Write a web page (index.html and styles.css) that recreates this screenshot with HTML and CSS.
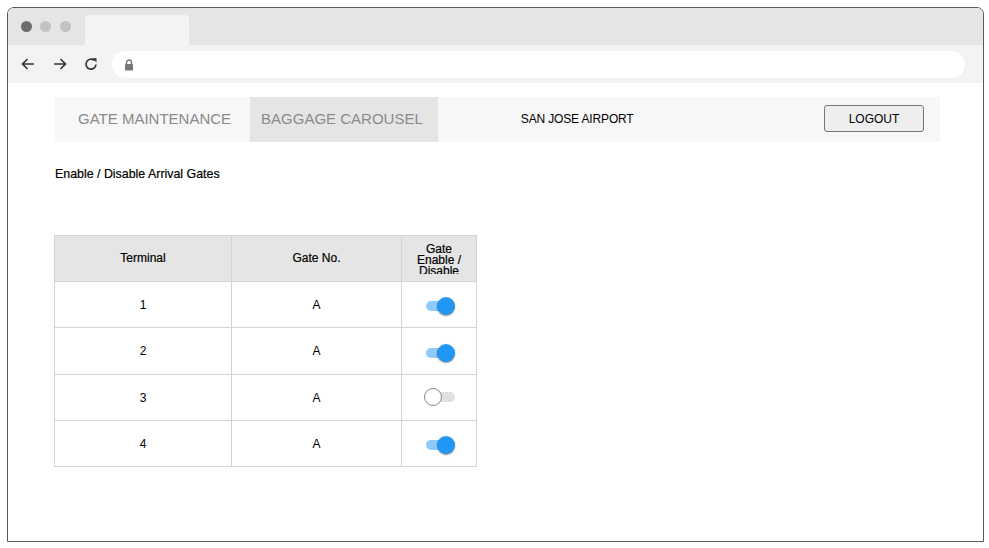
FILE: index.html
```html
<!DOCTYPE html>
<html>
<head>
<meta charset="utf-8">
<link rel="stylesheet" href="styles.css">
</head>
<body>
<div class="frame">
  <div class="tabbar">
    <div class="dots">
      <span class="dot dark"></span>
      <span class="dot"></span>
      <span class="dot"></span>
    </div>
    <div class="tab"></div>
  </div>
  <div class="toolbar">
    <svg class="icon" viewBox="0 0 16 16" width="16" height="16"><path d="M14 8H2.5M7.5 3L2.5 8l5 5" fill="none" stroke="#333" stroke-width="1.6"/></svg>
    <svg class="icon" viewBox="0 0 16 16" width="16" height="16"><path d="M2 8h11.5M8.5 3l5 5-5 5" fill="none" stroke="#333" stroke-width="1.6"/></svg>
    <svg class="icon" viewBox="0 0 16 16" width="16" height="16"><path d="M13 8.5A5 5 0 1 1 11.2 4.3" fill="none" stroke="#333" stroke-width="1.6"/><path d="M9.2 2.2h4.3v4.3z" fill="#333"/></svg>
    <div class="url">
      <svg class="lock" viewBox="0 0 10 12" width="10" height="12"><path d="M2.5 5V3.5a2.5 2.5 0 0 1 5 0V5" fill="none" stroke="#777" stroke-width="1.4"/><rect x="1" y="5" width="8" height="6.5" rx="0.8" fill="#777"/></svg>
    </div>
  </div>
  <div class="page">
    <nav class="nav">
      <a class="nav-link first">GATE MAINTENANCE</a>
      <a class="nav-link active">BAGGAGE CAROUSEL</a>
      <span class="airport">SAN JOSE AIRPORT</span>
      <button class="logout">LOGOUT</button>
    </nav>
    <h1 class="title">Enable / Disable Arrival Gates</h1>
    <table class="gates">
      <thead>
        <tr>
          <th class="c1">Terminal</th>
          <th class="c2">Gate No.</th>
          <th class="c3"><div class="clip">Gate Enable / Disable</div></th>
        </tr>
      </thead>
      <tbody>
        <tr><td>1</td><td>A</td><td><span class="switch on"><span class="track"></span><span class="thumb"></span></span></td></tr>
        <tr><td>2</td><td>A</td><td><span class="switch on"><span class="track"></span><span class="thumb"></span></span></td></tr>
        <tr><td>3</td><td>A</td><td><span class="switch"><span class="track"></span><span class="thumb"></span></span></td></tr>
        <tr><td>4</td><td>A</td><td><span class="switch on"><span class="track"></span><span class="thumb"></span></span></td></tr>
      </tbody>
    </table>
  </div>
</div>
</body>
</html>
```

FILE: styles.css
```css
* { box-sizing: border-box; }
html, body { margin: 0; padding: 0; background: #fff; }
body { font-family: "Liberation Sans", Arial, sans-serif; }

.frame {
  margin: 7px 0 0 7px;
  width: 977px;
  height: 535px;
  border: 1px solid #5a5a5a;
  border-radius: 7px 7px 0 0;
  overflow: hidden;
  background: #fff;
  display: flex;
  flex-direction: column;
}

.tabbar {
  height: 37px;
  background: #e5e5e5;
  display: flex;
  align-items: flex-end;
}
.dots {
  align-self: center;
  display: flex;
  gap: 8.5px;
  padding-left: 12.5px;
  width: 77px;
}
.dot {
  width: 11px;
  height: 11px;
  border-radius: 50%;
  background: #c2c2c2;
}
.dot.dark { background: #6d6d6d; }
.tab {
  width: 104px;
  height: 30px;
  background: #f3f3f3;
  border-radius: 4px 4px 0 0;
}

.toolbar {
  height: 38px;
  background: #f3f3f3;
  display: flex;
  align-items: center;
  padding-left: 12px;
}
.icon { margin-right: 15.5px; flex: none; }
.icon:nth-child(3) { margin-right: 13px; }
.url {
  width: 853px;
  height: 27px;
  background: #fff;
  border-radius: 14px;
  display: flex;
  align-items: center;
  padding-left: 12px;
  margin-top: 1px;
}

.page {
  padding: 14px 0 0 47px;
}

.nav {
  width: 885px;
  height: 45px;
  background: #f7f7f7;
  display: flex;
  align-items: center;
}
.nav-link {
  height: 100%;
  display: flex;
  align-items: center;
  font-size: 15px;
  color: #8a8a8a;
  padding-bottom: 2px;
}
.nav-link.first { padding-left: 23px; padding-right: 19px; }
.nav-link.active { background: #e5e5e5; padding-left: 11px; padding-right: 15px; }
.airport {
  font-size: 12px;
  color: #000;
  margin-left: 83px;
  margin-top: -2px;
  letter-spacing: -0.15px;
}
.logout {
  margin-left: auto;
  margin-right: 16px;
  width: 100px;
  height: 27px;
  background: #eeeeee;
  border: 1px solid #777;
  border-radius: 3px;
  font-family: "Liberation Sans", Arial, sans-serif;
  font-size: 12px;
  color: #000;
  padding: 0;
  margin-top: -2px;
}

.title {
  margin: 25px 0 0 0;
  font-size: 12.4px;
  font-weight: normal;
  color: #000;
  line-height: 14px;
  -webkit-text-stroke: 0.2px #000;
}

.gates {
  margin-top: 54px;
  margin-left: -1px;
  border-collapse: collapse;
  font-size: 12px;
  color: #000;
}
.gates th, .gates td {
  border: 1px solid #d3d3d3;
  text-align: center;
  padding: 0;
}
.gates th {
  background: #e5e5e5;
  height: 46px;
  font-weight: normal;
  line-height: 11px;
  -webkit-text-stroke: 0.2px #000;
}
.gates td { height: 46px; }
.gates tbody tr:nth-child(2) td { height: 47px; }
.c1 { width: 177px; }
.c2 { width: 170px; }
.c3 { width: 75px; }
.clip {
  height: 30px;
  overflow: hidden;
  margin-top: 1px;
  padding: 0 10px;
}

.switch {
  position: relative;
  display: inline-block;
  width: 31px;
  height: 18px;
  vertical-align: middle;
  margin-top: 3px;
  margin-left: 0;
}
.switch:not(.on) { margin-top: -2px; }
.track {
  position: absolute;
  left: 2px;
  top: 4px;
  width: 29px;
  height: 10px;
  border-radius: 5px;
  background: #e0e0e0;
}
.thumb {
  position: absolute;
  left: 0;
  top: 0;
  width: 18px;
  height: 18px;
  border-radius: 50%;
  background: #fff;
  border: 1px solid #888;
}
.switch.on .track { background: #90caf9; width: 24px; }
.switch.on .thumb {
  left: 13px;
  background: #2196f3;
  border: none;
  box-shadow: 0 1px 1.5px rgba(0,0,0,0.45);
}
```
